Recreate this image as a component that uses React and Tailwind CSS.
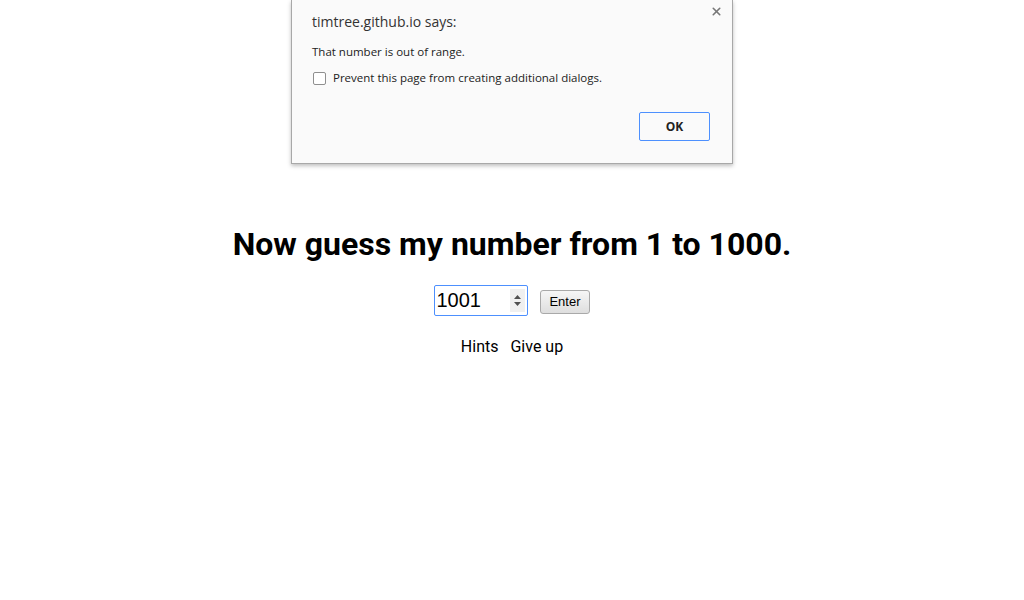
import React, { useState } from "react";
import { X } from "lucide-react";

const AlertDialog = () => (
  <div className="absolute left-[291px] top-0 w-[442px] h-[164px] bg-[#fafafa] border border-[#a8a8a8] border-t-0 shadow-[0_2px_4px_rgba(0,0,0,0.25)] font-['Open_Sans',sans-serif] text-[#333]">
    <button className="absolute right-[9px] top-[5px] text-[#777]">
      <X size={13} strokeWidth={3} />
    </button>
    <div className="pl-[20px] pt-[12px]">
      <div className="text-[14px] leading-[20px] text-[#333]">timtree.github.io says:</div>
      <div className="mt-[10px] text-[11.5px] leading-[20px] text-[#222]">That number is out of range.</div>
      <label className="mt-[6px] flex items-center gap-[7px] text-[11.5px] leading-[20px] text-[#222]">
        <span className="w-[13px] h-[13px] ml-[1px] border border-[#8f8f8f] rounded-[2px] bg-white" />
        Prevent this page from creating additional dialogs.
      </label>
    </div>
    <div className="flex justify-end pr-[22px] mt-[24px]">
      <button className="w-[71px] h-[29px] border border-[#4d90fe] rounded-[2px] bg-[#fafafa] text-[12px] font-bold text-[#222]">
        OK
      </button>
    </div>
  </div>
);

export default function App() {
  const [value, setValue] = useState("1001");

  return (
    <div className="relative w-full min-h-[600px] bg-white">
      <AlertDialog />

      <div className="flex flex-col items-center pt-[224px] font-['Roboto',sans-serif]">
        <h1 className="text-[32px] leading-[40px] font-bold text-black">
          Now guess my number from 1 to 1000.
        </h1>

        <div className="mt-[21px] flex items-center gap-[12px]">
          <div className="relative w-[94px] h-[31px] border border-[#4d90fe] rounded-[2px] bg-white">
            <input
              value={value}
              onChange={(e) => setValue(e.target.value)}
              className="w-full h-full pl-[1px] pr-[18px] text-[20px] font-['Liberation_Sans',sans-serif] text-black outline-none bg-transparent"
            />
            <div className="absolute right-[2px] top-[3px] w-[15px] h-[23px] bg-[#f0f0f0] flex flex-col items-center justify-center gap-[3px]">
              <svg width="7" height="4" viewBox="0 0 7 4"><path d="M0 4 L3.5 0 L7 4 Z" fill="#505050" /></svg>
              <svg width="7" height="4" viewBox="0 0 7 4"><path d="M0 0 L3.5 4 L7 0 Z" fill="#505050" /></svg>
            </div>
          </div>
          <button className="h-[24px] mt-[2px] px-[8px] border border-[#a9a9a9] rounded-[3px] bg-gradient-to-b from-[#f6f6f6] to-[#dedede] text-[13px] font-['Liberation_Sans',sans-serif] text-black">
            Enter
          </button>
        </div>

        <div className="mt-[21px] flex gap-[12px] text-[16px] leading-[20px] text-black">
          <span>Hints</span>
          <span>Give up</span>
        </div>
      </div>
    </div>
  );
}
